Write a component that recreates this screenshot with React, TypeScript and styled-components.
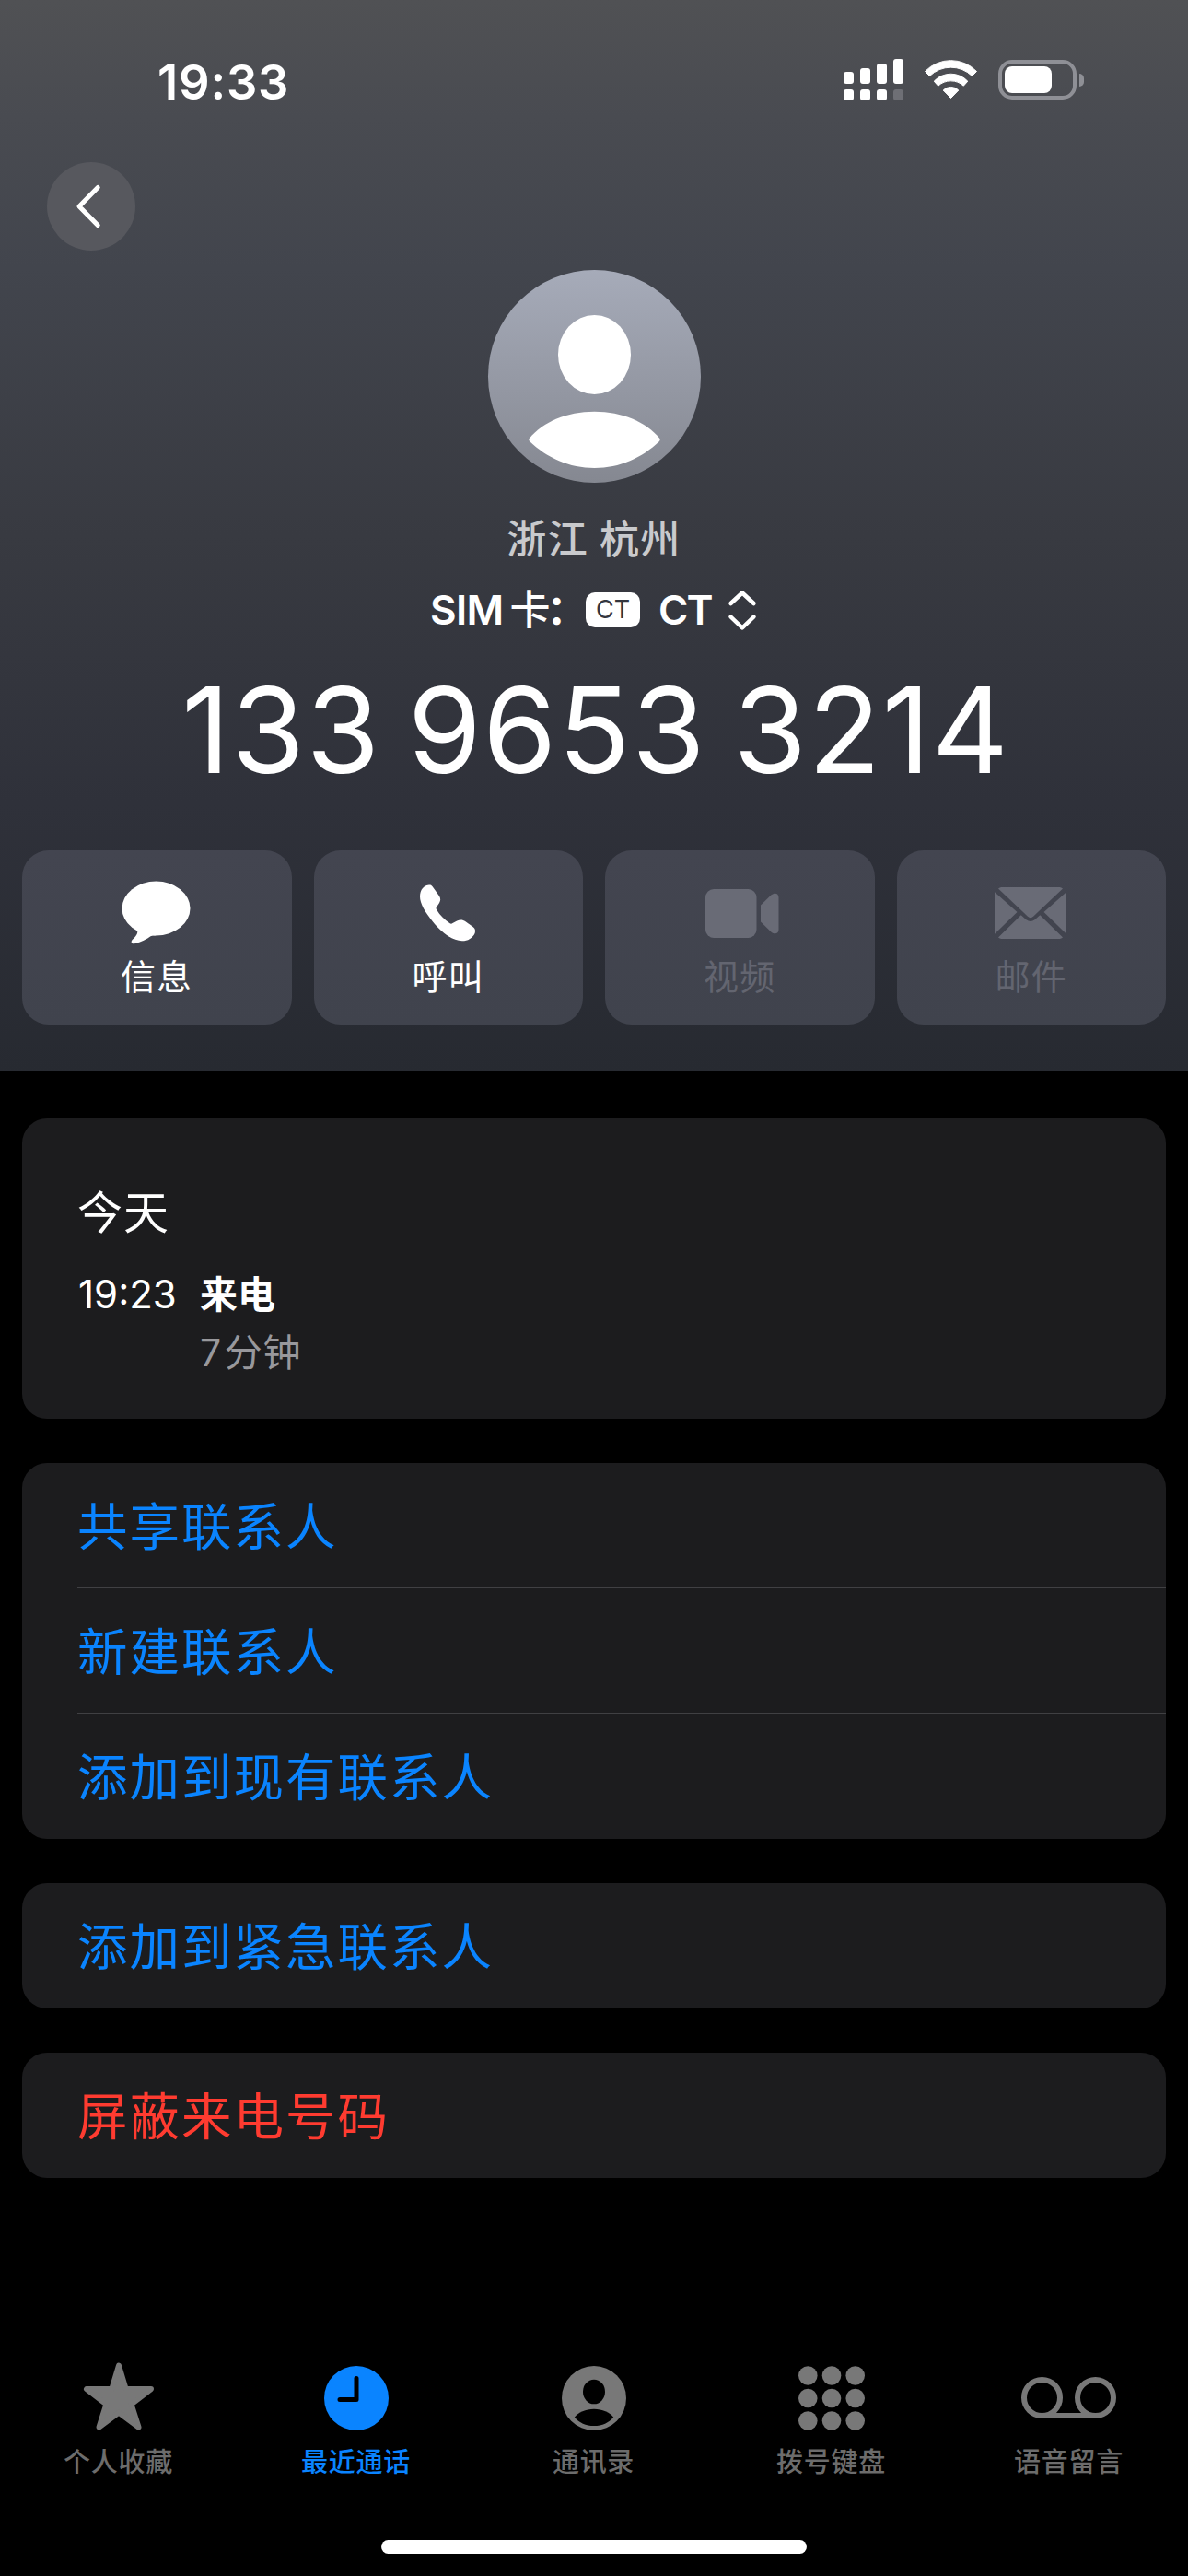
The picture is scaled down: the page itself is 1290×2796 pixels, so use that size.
import React from "react";
import styled, { createGlobalStyle } from "styled-components";

const GlobalStyle = createGlobalStyle`
  * { box-sizing: border-box; }
  html, body { margin: 0; background: #000; }
  body {
    font-family: Inter, "Noto Sans CJK SC", sans-serif;
    color: #fff;
  }
  svg { display: block; overflow: visible; }
  button { font: inherit; border: 0; padding: 0; background: none; color: inherit; }
`;

const Screen = styled.div`
  display: flex;
  flex-direction: column;
  width: 1290px;
  height: 2796px;
  background: #000;
  overflow: hidden;
`;

const Header = styled.header`
  display: flex;
  flex-direction: column;
  height: 1163px;
  background: linear-gradient(
    180deg,
    #505154 0%,
    #494b51 11%,
    #42454d 25%,
    #383a41 50%,
    #2f313a 75%,
    #272a31 100%
  );
`;

const StatusBar = styled.div`
  display: flex;
  justify-content: space-between;
  height: 176px;
  padding: 58px 113px 0 171px;
`;

const Clock = styled.time`
  padding-top: 1px;
  font-size: 52.5px;
  font-weight: 600;
  line-height: 60px;
  letter-spacing: 0.8px;
`;

const StatusIcons = styled.div`
  display: flex;
  align-items: flex-start;
  padding-top: 6px;
`;

const SignalIcon = styled.svg`
  margin-right: 23px;
`;

const WifiIcon = styled.svg`
  margin: 1px 23px 0 0;
`;

const Battery = styled.div`
  display: flex;
  align-items: center;
  margin-top: 1px;
`;

const BatteryShell = styled.div`
  width: 85px;
  height: 43px;
  padding: 3px;
  border: 4px solid #8f9096;
  border-radius: 15px;
`;

const BatteryLevel = styled.div`
  width: 51px;
  height: 29px;
  border-radius: 8px;
  background: #fff;
`;

const BatteryCap = styled.div`
  width: 5px;
  height: 14px;
  margin-left: 3px;
  border-radius: 0 5px 5px 0;
  background: #8f9096;
`;

const BackButton = styled.button`
  display: flex;
  align-items: center;
  justify-content: center;
  width: 96px;
  height: 96px;
  margin-left: 51px;
  padding-right: 6px;
  border-radius: 50%;
  background: #57585e;
`;

const Avatar = styled.div`
  display: flex;
  align-self: center;
  width: 231px;
  height: 231px;
  margin: 21px 0 0 1px;
  border-radius: 50%;
  background: linear-gradient(180deg, #a6abb9, #858891);
`;

const Place = styled.div`
  margin-top: 31px;
  font-size: 43px;
  font-weight: 500;
  line-height: 60px;
  letter-spacing: 1.4px;
  word-spacing: -1px;
  text-align: center;
  color: #c9cacd;
`;

const SimRow = styled.div`
  display: flex;
  align-items: center;
  justify-content: center;
  height: 60px;
  margin-top: 17px;
  font-size: 44px;
  font-weight: 500;
  line-height: 60px;
`;

const SimLabel = styled.span`
  width: 169px;
  white-space: nowrap;
`;

const SimWord = styled.span`
  margin-right: 7px;
  font-weight: 600;
  letter-spacing: -0.6px;
`;

const SimColon = styled.span`
  margin-left: -4px;
  font-weight: 700;
`;

const CarrierBadge = styled.span`
  display: flex;
  align-items: center;
  justify-content: center;
  width: 59px;
  height: 38px;
  margin-right: 20px;
  border-radius: 10px;
  background: #fff;
  color: #34363e;
  font-size: 27px;
  font-weight: 400;
  line-height: 38px;
`;

const Carrier = styled.span`
  width: 76px;
  font-weight: 600;
  letter-spacing: -2px;
`;

const PhoneNumber = styled.h1`
  margin: 25px 0 0;
  padding-left: 4px;
  font-size: 129px;
  font-weight: 400;
  line-height: 150px;
  letter-spacing: 1.6px;
  word-spacing: -9px;
  text-align: center;
  white-space: nowrap;
`;

const Actions = styled.div`
  display: grid;
  grid-template-columns: repeat(4, 1fr);
  gap: 24px;
  margin: 56px 24px 0;
`;

const ActionButton = styled.button<{ $disabled?: boolean }>`
  display: flex;
  flex-direction: column;
  align-items: center;
  height: 189px;
  padding-top: 33px;
  border-radius: 29px;
  background: linear-gradient(180deg, #434550, #40434d);
  color: ${(p) => (p.$disabled ? "#696b76" : "#fff")};
`;

const ActionIcon = styled.span<{ $nudge?: number }>`
  display: flex;
  align-items: center;
  justify-content: center;
  height: 70px;
  margin-left: ${(p) => p.$nudge ?? -2}px;
`;

const ActionLabel = styled.span<{ $disabled?: boolean }>`
  margin-top: 9px;
  font-size: 38px;
  line-height: 50px;
  letter-spacing: 1.2px;
  color: ${(p) => (p.$disabled ? "#636570" : "#fff")};
`;

const Content = styled.main`
  display: flex;
  flex-direction: column;
  gap: 48px;
  margin-top: 51px;
  padding: 0 24px;
`;

const Card = styled.section`
  border-radius: 27px;
  background: #1c1c1e;
  overflow: hidden;
`;

const HistoryCard = styled(Card)`
  height: 326px;
  padding: 73px 60px 0;
`;

const Day = styled.h2`
  margin: 0;
  font-size: 49px;
  font-weight: 400;
  line-height: 60px;
  letter-spacing: 1px;
`;

const CallEntry = styled.div`
  display: grid;
  grid-template-columns: 133px 1fr;
  row-gap: 13px;
  margin-top: 33px;
  font-size: 42px;
  line-height: 50px;
`;

const CallTime = styled.time`
  padding-left: 1px;
`;

const CallKind = styled.span`
  font-size: 41px;
  font-weight: 700;
`;

const CallLength = styled.span`
  grid-column: 2;
  font-size: 41px;
  letter-spacing: 0.6px;
  color: #98989c;
  span { margin-right: 3px; }
`;

const Row = styled.button<{ $danger?: boolean }>`
  display: block;
  width: 100%;
  height: 136px;
  padding: 2px 0 0 60px;
  font-size: 54.5px;
  line-height: 134px;
  letter-spacing: 2px;
  text-align: left;
  color: ${(p) => (p.$danger ? "#ff3b30" : "#0a84ff")};

  &:not(:last-child) {
    background: linear-gradient(#404043, #404043) 60px 100% / 100% 1px no-repeat;
  }
`;

const TabBar = styled.nav`
  display: grid;
  grid-template-columns: repeat(5, 1fr);
  margin-top: auto;
`;

const Tab = styled.button<{ $active?: boolean }>`
  display: flex;
  flex-direction: column;
  align-items: center;
  color: ${(p) => (p.$active ? "#0a84ff" : "#787878")};
`;

const TabIcon = styled.span`
  display: flex;
  align-items: center;
  justify-content: center;
  height: 76px;
  margin-left: -1px;
`;

const TabLabel = styled.span<{ $active?: boolean }>`
  margin: 12px 0 0 -1px;
  font-size: 29px;
  font-weight: 500;
  line-height: 40px;
  letter-spacing: 0.7px;
  color: ${(p) => (p.$active ? "#0a84ff" : "#6c6c6c")};
`;

const HomeIndicator = styled.div`
  align-self: center;
  flex: none;
  width: 462px;
  height: 15px;
  margin: 64px 0 24px;
  border-radius: 8px;
  background: #fff;
`;

const Signal = () => (
  <SignalIcon width="65" height="45" viewBox="0 0 65 45" fill="#fff">
    <rect x="0" y="14" width="11" height="13" rx="3" />
    <rect x="18" y="10" width="11" height="17" rx="3" />
    <rect x="36" y="5" width="11" height="22" rx="3" />
    <rect x="54" y="0" width="11" height="27" rx="3" />
    <rect x="0" y="33" width="11" height="12" rx="3" />
    <rect x="18" y="33" width="11" height="12" rx="3" />
    <rect x="36" y="33" width="11" height="12" rx="3" />
    <rect x="54" y="33" width="11" height="12" rx="3" fill="#6e6f75" />
  </SignalIcon>
);

const Wifi = () => (
  <WifiIcon
    width="57"
    height="42"
    viewBox="0 0 57 42"
    fill="#fff"
    stroke="#fff"
    strokeWidth="1"
    strokeLinejoin="round"
  >
    <path d="M.5 12.5A39 39 0 0 1 56.500 12.500L51.500 17.500A33 33 0 0 0 5.500 17.500Z" />
    <path d="M10.200 23.200A25 25 0 0 1 46.800 23.200L42.300 28.200A20.500 20.500 0 0 0 14.700 28.200Z" />
    <path d="M20.200 33A11.500 11.500 0 0 1 36.800 33L28.500 41.500Z" />
  </WifiIcon>
);

const MessageIcon = () => (
  <svg width="74" height="68" viewBox="0 0 74 68" fill="currentColor">
    <ellipse cx="37.500" cy="29" rx="37" ry="29.500" />
    <path d="M17 53C18 56 16 59 11.600 63C9.500 65.500 11 67.700 14 67.200C21 66 28 62 31.500 59.300C33 58.200 35 58.500 37 58.500L30 48Z" />
  </svg>
);

const PhoneIcon = () => (
  <svg width="60" height="62" viewBox="0 0 60 62" fill="currentColor">
    <path d="M3 4C5.500 1.500 7.800.6 10 .6C11.600.6 12.700 1 13.600 2.300L20.800 12.300C22.600 15 22.700 17.200 20.600 20.700L18 24.400C17.300 25.500 17.400 26.300 18 27.300C21.800 33.500 26.500 38.300 32.600 42.200C33.600 42.900 34.500 42.800 35.500 42L40.200 39.600C43.500 37.900 46.500 38.100 49.500 40.200L57.500 46C59.300 47.500 60 48.600 60 50.500C60 53.300 58.700 55.300 56.300 57.500C53.500 60 50 61.200 45.800 61.200C35 61.200 23 51.500 14 40.500C5.500 30 0 20.500 0 13C0 9.500 1 6 3 4Z" />
  </svg>
);

const VideoIcon = () => (
  <svg width="80" height="53" viewBox="0 0 80 53" fill="currentColor">
    <rect width="55.500" height="53" rx="9" />
    <path d="M60 17.500L71.500 6.300C75 3.500 79.500 4.300 79.500 9V44C79.500 48.600 75 49.500 71.500 46.700L60 35.500Z" />
  </svg>
);

const MailIcon = () => (
  <svg width="78" height="56" viewBox="0 0 78 56" fill="currentColor">
    <path d="M4 1.500C5.500.4 7 0 9 0H69C71 0 72.500.4 74 1.500L42 31.800Q39 34.500 36 31.800Z" />
    <path d="M0 5.300L24.500 27L0 50.700Z" />
    <path d="M78 5.300L53.500 27L78 50.700Z" />
    <path d="M28.700 30.300L34.300 35.300Q39 38.800 43.700 35.300L49.300 30.300L74 54.500C72.500 55.600 71 56 69 56H9C7 56 5.500 55.600 4 54.500Z" />
  </svg>
);

const StarIcon = () => (
  <svg
    width="76"
    height="77"
    viewBox="0 0 76 77"
    fill="currentColor"
    stroke="currentColor"
    strokeWidth="6"
    strokeLinejoin="round"
  >
    <path d="M38 2.500L45.700 28H73L51.500 44.500L59.500 69.500L38 53.700L16.500 69.500L24.500 44.500L3 28H30.300Z" />
  </svg>
);

const RecentsIcon = () => (
  <svg width="70" height="70" viewBox="0 0 70 70">
    <circle cx="35" cy="35" r="35" fill="currentColor" />
    <path
      d="M35 13.500V36.500H17"
      fill="none"
      stroke="#000"
      strokeWidth="5"
      strokeLinecap="round"
      strokeLinejoin="round"
    />
  </svg>
);

const ContactsIcon = () => (
  <svg width="70" height="70" viewBox="0 0 70 70">
    <circle cx="35" cy="35" r="35" fill="currentColor" />
    <ellipse cx="35" cy="28" rx="12" ry="13.300" fill="#000" />
    <path d="M13.800 55.700C18 50.200 26 46.700 35 46.700C44 46.700 52 50.200 56.200 55.700C51 61.700 44 65 35 65C26 65 19 61.700 13.800 55.700Z" fill="#000" />
  </svg>
);

const KeypadIcon = () => (
  <svg width="72" height="70" viewBox="0 0 72 70" fill="currentColor">
    {[10.5, 35, 59.5].map((y) =>
      [10.3, 36, 61.7].map((x) => <circle key={`${x}-${y}`} cx={x} cy={y} r="10.300" />)
    )}
  </svg>
);

const VoicemailIcon = () => (
  <svg
    width="103"
    height="47"
    viewBox="0 0 103 47"
    fill="none"
    stroke="currentColor"
    strokeWidth="6"
  >
    <circle cx="22.500" cy="22.500" r="19.500" />
    <circle cx="80.500" cy="22.500" r="19.500" />
    <path d="M22.500 42H80.500" />
  </svg>
);

const actions = [
  { label: "信息", icon: <MessageIcon /> },
  { label: "呼叫", icon: <PhoneIcon /> },
  { label: "视频", icon: <VideoIcon />, nudge: 5, disabled: true },
  { label: "邮件", icon: <MailIcon />, disabled: true },
];

const tabs = [
  { label: "个人收藏", icon: <StarIcon /> },
  { label: "最近通话", icon: <RecentsIcon />, active: true },
  { label: "通讯录", icon: <ContactsIcon /> },
  { label: "拨号键盘", icon: <KeypadIcon /> },
  { label: "语音留言", icon: <VoicemailIcon /> },
];

export default function App() {
  return (
    <>
      <GlobalStyle />
      <Screen>
        <Header>
          <StatusBar>
            <Clock>19:33</Clock>
            <StatusIcons>
              <Signal />
              <Wifi />
              <Battery>
                <BatteryShell>
                  <BatteryLevel />
                </BatteryShell>
                <BatteryCap />
              </Battery>
            </StatusIcons>
          </StatusBar>
          <BackButton aria-label="返回">
            <svg width="26" height="46" viewBox="0 0 26 46" fill="none" stroke="#fff" strokeWidth="5" strokeLinecap="round" strokeLinejoin="round">
              <path d="M23.200 2.500L3 23L23.200 43.500" />
            </svg>
          </BackButton>
          <Avatar>
            <svg width="231" height="231" viewBox="0 0 231 231" fill="#fff">
              <ellipse cx="115.500" cy="92" rx="39.500" ry="43" />
              <path d="M45 182.500C60 165 85 153.800 115.500 153.800C146 153.800 171 165 186 182.500Q187.500 184.500 186 186C167 204 143 215 115.500 215C88 215 64 204 45 186Q43.500 184.500 45 182.500Z" />
            </svg>
          </Avatar>
          <Place>浙江 杭州</Place>
          <SimRow>
            <SimLabel>
              <SimWord>SIM</SimWord>卡<SimColon>：</SimColon>
            </SimLabel>
            <CarrierBadge>CT</CarrierBadge>
            <Carrier>CT</Carrier>
            <svg width="32" height="43" viewBox="0 0 32 43" fill="none" stroke="#fff" strokeWidth="4.500" strokeLinecap="round" strokeLinejoin="round">
              <path d="M2.500 14L15 2.500L27.500 14M2.500 28.500L15 40.500L27.500 28.500" />
            </svg>
          </SimRow>
          <PhoneNumber>133 9653 3214</PhoneNumber>
          <Actions>
            {actions.map((a) => (
              <ActionButton key={a.label} $disabled={a.disabled}>
                <ActionIcon $nudge={a.nudge}>{a.icon}</ActionIcon>
                <ActionLabel $disabled={a.disabled}>{a.label}</ActionLabel>
              </ActionButton>
            ))}
          </Actions>
        </Header>
        <Content>
          <HistoryCard>
            <Day>今天</Day>
            <CallEntry>
              <CallTime>19:23</CallTime>
              <CallKind>来电</CallKind>
              <CallLength>
                <span>7</span>分钟
              </CallLength>
            </CallEntry>
          </HistoryCard>
          <Card>
            <Row>共享联系人</Row>
            <Row>新建联系人</Row>
            <Row>添加到现有联系人</Row>
          </Card>
          <Card>
            <Row>添加到紧急联系人</Row>
          </Card>
          <Card>
            <Row $danger>屏蔽来电号码</Row>
          </Card>
        </Content>
        <TabBar>
          {tabs.map((t) => (
            <Tab key={t.label} $active={t.active}>
              <TabIcon>{t.icon}</TabIcon>
              <TabLabel $active={t.active}>{t.label}</TabLabel>
            </Tab>
          ))}
        </TabBar>
        <HomeIndicator />
      </Screen>
    </>
  );
}
